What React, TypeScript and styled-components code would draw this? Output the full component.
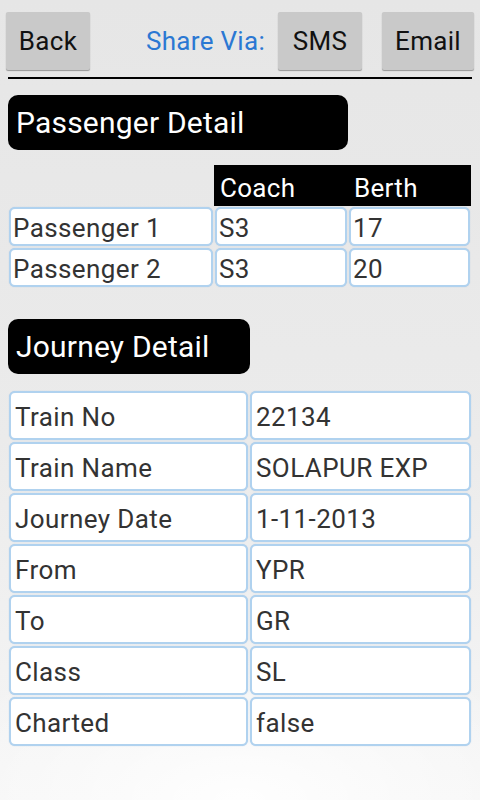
import React, { ReactElement } from 'react';
import styled, { createGlobalStyle } from 'styled-components';

const PASSENGERS = [
  { name: 'Passenger 1', coach: 'S3', berth: '17' },
  { name: 'Passenger 2', coach: 'S3', berth: '20' },
];

const JOURNEY = [
  ['Train No', '22134'],
  ['Train Name', 'SOLAPUR EXP'],
  ['Journey Date', '1-11-2013'],
  ['From', 'YPR'],
  ['To', 'GR'],
  ['Class', 'SL'],
  ['Charted', 'false'],
];

function App(): ReactElement {
  return (
    <>
      <GlobalStyle />
      <Screen>
        <Toolbar>
          <Button width={84}>Back</Button>
          <ShareLabel>Share Via:</ShareLabel>
          <Button width={84}>SMS</Button>
          <Button width={92}>Email</Button>
        </Toolbar>
        <Divider />

        <SectionTitle width={340}>Passenger Detail</SectionTitle>
        <PassengerTable>
          <span />
          <HeadCell>Coach</HeadCell>
          <HeadCell>Berth</HeadCell>
          {PASSENGERS.map(({ name, coach, berth }) => (
            <React.Fragment key={name}>
              <Cell>{name}</Cell>
              <Cell>{coach}</Cell>
              <Cell>{berth}</Cell>
            </React.Fragment>
          ))}
        </PassengerTable>

        <SectionTitle width={242}>Journey Detail</SectionTitle>
        <JourneyTable>
          {JOURNEY.map(([label, value]) => (
            <React.Fragment key={label}>
              <Cell tall>{label}</Cell>
              <Cell tall>{value}</Cell>
            </React.Fragment>
          ))}
        </JourneyTable>
      </Screen>
    </>
  );
}

const GlobalStyle = createGlobalStyle`
  html, body {
    margin: 0;
    padding: 0;
  }
  body {
    font-family: Roboto, "Noto Sans", sans-serif;
  }
`;

const Screen = styled.div`
  width: 480px;
  height: 800px;
  box-sizing: border-box;
  padding: 12px 8px 0;
  background:
    radial-gradient(ellipse 70% 20% at 50% 100%, rgba(255, 255, 255, 0.9), rgba(255, 255, 255, 0) 100%),
    linear-gradient(180deg, #e6e6e6 0%, #ebebeb 55%, #f6f6f6 100%);
  overflow: hidden;
`;

const Toolbar = styled.div`
  display: flex;
  align-items: center;
  height: 58px;
  margin: 0 -2px;
`;

const Button = styled.div<{ width: number }>`
  width: ${({ width }) => width}px;
  height: 58px;
  box-sizing: border-box;
  display: flex;
  align-items: center;
  justify-content: center;
  background: #c9c9c9;
  border-radius: 2px;
  box-shadow: 0 1px 1px rgba(0, 0, 0, 0.35);
  color: #111;
  font-size: 26px;
  letter-spacing: 0.3px;
  & + & {
    margin-left: 20px;
  }
`;

const ShareLabel = styled.div`
  margin-left: auto;
  margin-right: 13px;
  color: #2b78d3;
  font-size: 26px;
  letter-spacing: 0.3px;
`;

const Divider = styled.div`
  height: 2px;
  margin-top: 7px;
  background: #000;
`;

const SectionTitle = styled.div<{ width: number }>`
  width: ${({ width }) => width}px;
  height: 55px;
  box-sizing: border-box;
  margin-top: 16px;
  padding: 0 0 0 8px;
  display: flex;
  align-items: center;
  background: #000;
  border-radius: 10px;
  color: #fff;
  font-size: 30px;
  letter-spacing: 0.2px;
  & ~ & {
    margin-top: 31px;
  }
`;

const PassengerTable = styled.div`
  display: grid;
  grid-template-columns: 206px 134px 123px;
  grid-template-rows: 41px 41px 41px;
  margin-top: 15px;
`;

const HeadCell = styled.div`
  display: flex;
  align-items: center;
  padding: 4px 0 0 6px;
  background: #000;
  color: #fff;
  font-size: 26px;
  letter-spacing: 0.3px;
`;

const JourneyTable = styled.div`
  display: grid;
  grid-template-columns: 241px 223px;
  grid-auto-rows: 51px;
  margin-top: 16px;
`;

const Cell = styled.div<{ tall?: boolean }>`
  display: flex;
  align-items: center;
  box-sizing: border-box;
  margin: 1px;
  padding: ${({ tall }) => (tall ? '2px 0 0 4px' : '2px 0 0 2px')};
  background: #fff;
  border: 2px solid #b0d2ef;
  border-radius: 6px;
  box-shadow: 0 0 1px rgba(120, 170, 220, 0.6);
  color: #333;
  font-size: 26px;
  letter-spacing: 0.4px;
`;

export default App;
